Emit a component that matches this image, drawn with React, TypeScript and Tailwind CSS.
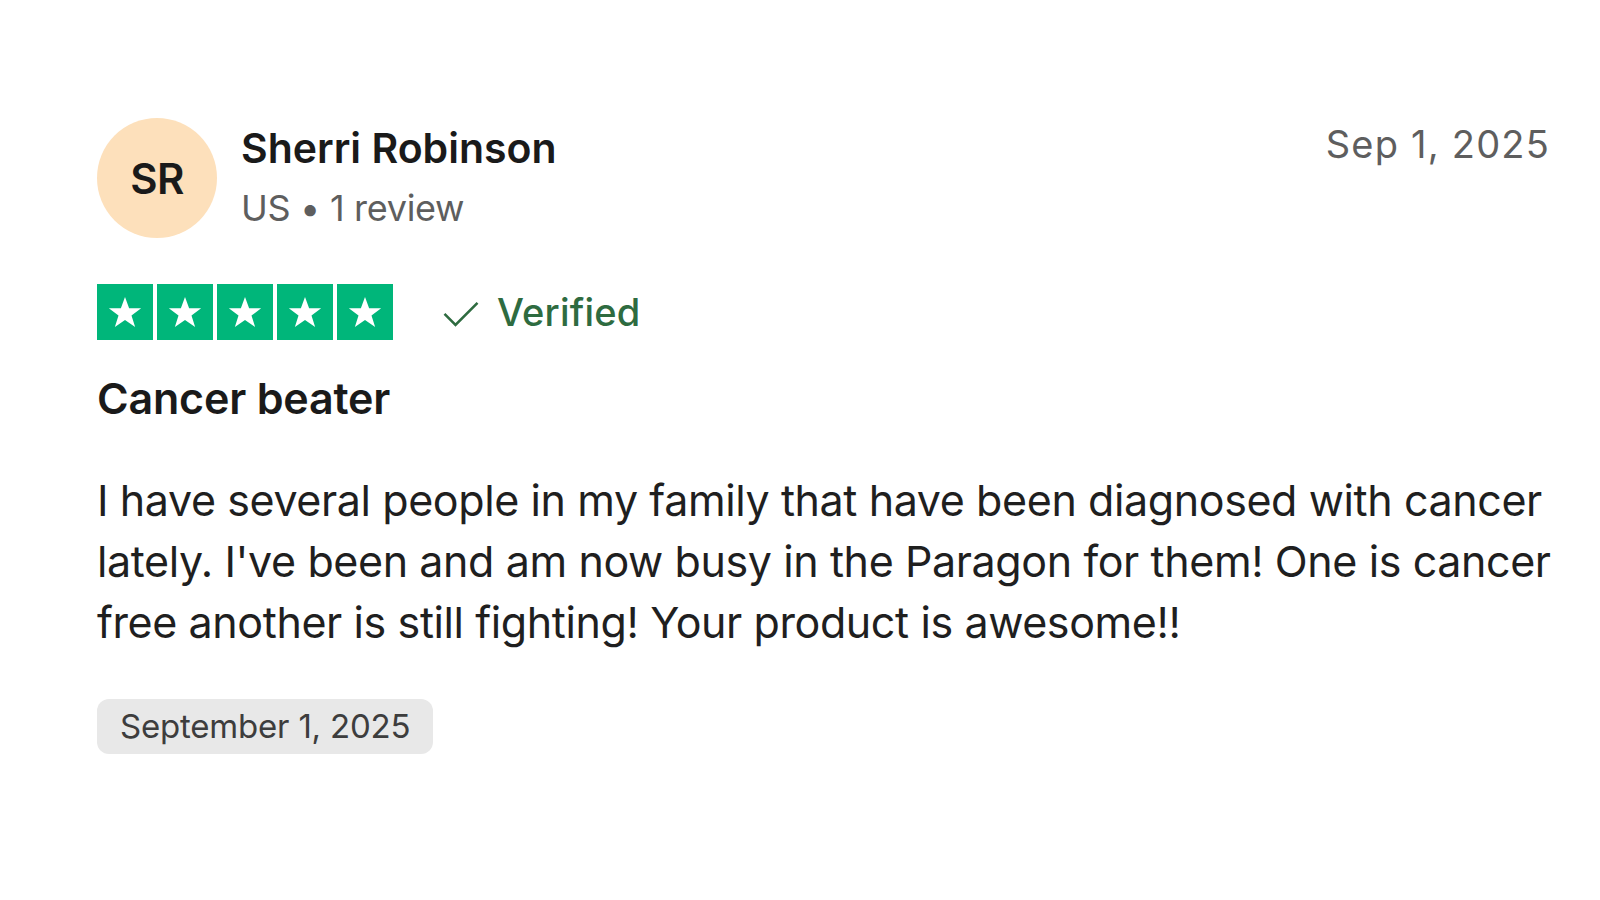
import React from 'react';

const font = { fontFamily: 'Inter, "Noto Sans", sans-serif' };

function Star() {
  return (
    <div className="w-[56px] h-[56px] bg-[#00b67a] flex items-center justify-center">
      <svg viewBox="0 0 24 24" className="w-[38px] h-[38px]" fill="#ffffff">
        <path d="M12 2.5l2.6 7.2h7.6l-6.1 4.5 2.3 7.3L12 17l-6.4 4.5 2.3-7.3-6.1-4.5h7.6z" />
      </svg>
    </div>
  );
}

export default function App() {
  return (
    <div className="w-[1600px] h-[900px] bg-white pl-[97px] pr-[30px] pt-[118px] text-[#1a1a1a]" style={font}>
      <div className="flex justify-between items-start pr-[20px]">
        <div className="flex items-start">
          <div className="w-[120px] h-[120px] rounded-full bg-[#fde0bb] flex items-center justify-center text-[42px] font-semibold tracking-[-0.5px]">
            SR
          </div>
          <div className="ml-[24px] flex flex-col">
            <div className="text-[41px] font-semibold leading-[48px] mt-[6px] tracking-[0px]">Sherri Robinson</div>
            <div className="text-[36px] leading-[40px] mt-[16px] text-[#5e5e5e] tracking-[-0.3px]">US • 1 review</div>
          </div>
        </div>
        <div className="text-[38px] leading-[40px] mt-[6px] text-[#5e5e5e] tracking-[1.2px]">Sep 1, 2025</div>
      </div>

      <div className="flex items-center mt-[46px]">
        <div className="flex gap-[4px]">
          <Star />
          <Star />
          <Star />
          <Star />
          <Star />
        </div>
        <div className="flex items-center ml-[46px] text-[#2e6b40]">
          <svg viewBox="0 0 24 24" className="w-[44px] h-[44px]" fill="none" stroke="#2e6b40" strokeWidth="1.4">
            <path d="M3 13l6 6L21 7" />
          </svg>
          <span className="ml-[14px] text-[38px] leading-[40px] font-medium tracking-[0.2px]">Verified</span>
        </div>
      </div>

      <div className="text-[43px] font-semibold leading-[48px] mt-[34px] tracking-[-0.2px]">Cancer beater</div>

      <p className="text-[43px] leading-[61px] mt-[48px] text-[#1f1f1f] tracking-[-0.4px]">
        I have several people in my family that have been diagnosed with cancer lately. I've been and am now busy in the Paragon for them! One is cancer free another is still fighting! Your product is awesome!!
      </p>

      <div className="mt-[46px] inline-flex items-center h-[55px] px-[23px] rounded-[12px] bg-[#e8e8e8] text-[33px] text-[#3d3d3d] tracking-[-0.2px]">
        September 1, 2025
      </div>
    </div>
  );
}
